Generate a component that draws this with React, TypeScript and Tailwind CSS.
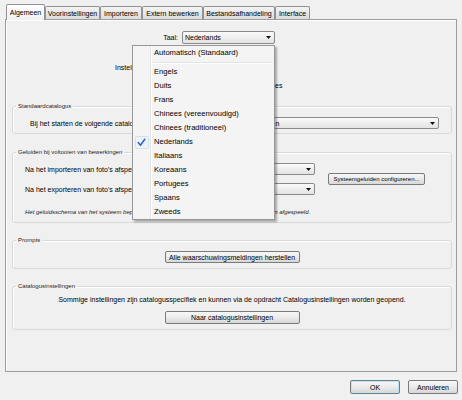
import React from "react";

function Arrow() {
  return (
    <svg width="5" height="3" viewBox="0 0 5 3" className="shrink-0">
      <path d="M0 0H5L2.5 3Z" fill="#111" />
    </svg>
  );
}

function Select({ className, text }: { className: string; text: string }) {
  return (
    <div
      className={
        "flex items-center overflow-hidden rounded-[2px] border border-[#8a8a8a] bg-linear-to-b from-[#fafafa] to-[#e3e3e3] pl-[2px] pr-[3px] " +
        className
      }
    >
      <span className="flex-1 overflow-hidden whitespace-nowrap">{text}</span>
      <Arrow />
    </div>
  );
}

function Button({ className, children }: { className: string; children: React.ReactNode }) {
  return (
    <div
      className={
        "flex items-center justify-center whitespace-nowrap rounded-[2px] border border-[#7a7a7a] bg-linear-to-b from-[#f7f7f7] via-[#ebebeb] to-[#d7d7d7] " +
        className
      }
    >
      {children}
    </div>
  );
}

function Group({
  label,
  className,
  children,
}: {
  label: string;
  className: string;
  children: React.ReactNode;
}) {
  return (
    <fieldset
      className={
        "ml-[6px] w-[440px] rounded-[3px] border border-[#d6dadd] shadow-[inset_1px_1px_0_#ffffff] " +
        className
      }
    >
      <legend className="ml-[3px] px-[2px] text-[6px] leading-[8px] text-[#1a1a1a]">{label}</legend>
      {children}
    </fieldset>
  );
}

function Tab({ className, children }: { className: string; children: React.ReactNode }) {
  return (
    <div
      className={
        "flex h-[13px] items-center justify-center whitespace-nowrap rounded-t-[2px] border border-b-0 border-[#8f9299] bg-linear-to-b from-[#f3f3f3] to-[#dcdcdc] " +
        className
      }
    >
      {children}
    </div>
  );
}

function CheckRow({ children }: { children: React.ReactNode }) {
  return (
    <div className="flex h-[12px] items-center gap-[5px] whitespace-nowrap">
      <div className="flex h-[9px] w-[9px] items-center justify-center border border-[#8f8f8f] bg-white">
        <svg width="7" height="7" viewBox="0 0 7 7">
          <path d="M1 3.5L3 5.5L6 1" stroke="#333" strokeWidth="1.2" fill="none" />
        </svg>
      </div>
      <span>{children}</span>
    </div>
  );
}

function MenuItem({ checked, children }: { checked?: boolean; children: React.ReactNode }) {
  return (
    <div className="flex h-[14px] items-center">
      <div className="flex h-full w-[18px] items-center justify-center border-r border-[#e2e3e3] shadow-[1px_0_0_#ffffff]">
        {checked && (
          <div className="flex h-[13px] w-[14px] items-center justify-center rounded-[2px] border border-[#d6e1f0] bg-[#eef3fa]">
            <svg width="9" height="9" viewBox="0 0 9 9">
              <path
                d="M1.2 4.6L3.4 7.2L7.8 1.2"
                stroke="#2a62c9"
                strokeWidth="1.5"
                fill="none"
                strokeLinecap="round"
                strokeLinejoin="round"
              />
            </svg>
          </div>
        )}
      </div>
      <span className="ml-[3px] whitespace-nowrap">{children}</span>
    </div>
  );
}

export default function App() {
  const langs = [
    "Engels",
    "Duits",
    "Frans",
    "Chinees (vereenvoudigd)",
    "Chinees (traditioneel)",
    "Nederlands",
    "Italiaans",
    "Koreaans",
    "Portugees",
    "Spaans",
    "Zweeds",
  ];
  return (
    <div className="relative h-[400px] w-[462px] overflow-hidden bg-[#f0f0f0] font-['Liberation_Sans',Arial,sans-serif] text-[7px] leading-none text-black">
      {/* Tabs */}
      <div className="flex h-[19px] items-end pl-[6px]">
        <div className="relative z-10 -mb-px flex h-[16px] w-[39px] items-center justify-center rounded-t-[2px] border border-b-0 border-[#8f9299] bg-linear-to-b from-[#ffffff] to-[#f0f0f0]">
          Algemeen
        </div>
        <Tab className="w-[55px]">Voorinstellingen</Tab>
        <Tab className="w-[42px]">Importeren</Tab>
        <Tab className="w-[61px]">Extern bewerken</Tab>
        <Tab className="w-[72px]">Bestandsafhandeling</Tab>
        <Tab className="w-[35px]">Interface</Tab>
      </div>

      {/* Panel */}
      <div className="ml-[5px] h-[353px] w-[452px] border border-[#9d9d9d] shadow-[inset_1px_1px_0_#ffffff]">
        <div className="mt-[11px] flex h-[13px] items-center">
          <span className="ml-[109px] w-[63px] text-right">Taal:</span>
          <Select className="ml-[4px] h-[13px] w-[93px]" text="Nederlands" />
        </div>

        <div className="ml-[109px] mt-[17px] flex">
          <span className="flex h-[12px] items-center">Instellingen:</span>
          <div className="ml-[4px] flex flex-col gap-[6px]">
            <CheckRow>Welkomstscherm tonen</CheckRow>
            <CheckRow>Automatisch controleren op updates</CheckRow>
          </div>
        </div>

        <Group label="Standaardcatalogus" className="mt-[11px] pb-[4px]">
          <div className="mt-[7px] flex h-[12px] items-center pl-[17px] pr-[12px]">
            <span className="whitespace-nowrap">Bij het starten de volgende catalogus gebruiken:</span>
            <Select className="ml-auto h-[12px] w-[258px]" text="Meest recente catalogus laden" />
          </div>
        </Group>

        <Group label="Geluiden bij voltooien van bewerkingen" className="mt-[14px] pb-[6px]">
          <div className="mt-[7px] flex items-center pl-[12px]">
            <div className="flex w-[290px] flex-col gap-[8px]">
              <div className="flex h-[12px] items-center">
                <span className="flex-1 whitespace-nowrap">Na het importeren van foto's afspelen:</span>
                <Select className="h-[12px] w-[144px]" text="Geen geluid" />
              </div>
              <div className="flex h-[12px] items-center">
                <span className="flex-1 whitespace-nowrap">Na het exporteren van foto's afspelen:</span>
                <Select className="h-[12px] w-[144px]" text="Geen geluid" />
              </div>
            </div>
            <Button className="ml-[13px] h-[12px] w-[97px] text-[6px]">Systeemgeluiden configureren...</Button>
          </div>
          <p className="mt-[13px] whitespace-nowrap pl-[12px] text-[6px] italic leading-[8px] text-[#222]">
            Het geluidsschema van het systeem bepaalt welke geluiden er bij deze gebeurtenissen worden afgespeeld.
          </p>
        </Group>

        <Group label="Prompts" className="mt-[13px] pb-[5px]">
          <div className="mt-[7px] flex justify-center">
            <Button className="h-[12px] w-[135px]">Alle waarschuwingsmeldingen herstellen</Button>
          </div>
        </Group>

        <Group label="Catalogusinstellingen" className="mt-[13px] pb-[5px]">
          <p className="mt-[6px] text-center leading-[8px]">
            Sommige instellingen zijn catalogusspecifiek en kunnen via de opdracht Catalogusinstellingen worden geopend.
          </p>
          <div className="mt-[7px] flex justify-center">
            <Button className="h-[13px] w-[135px]">Naar catalogusinstellingen</Button>
          </div>
        </Group>
      </div>

      {/* Footer */}
      <div className="mt-[8px] flex justify-end gap-[8px] pr-[4px]">
        <Button className="h-[14px] w-[50px] border-[#3c7fb1] shadow-[inset_0_0_0_1px_#b9e4f8]">OK</Button>
        <Button className="h-[14px] w-[50px]">Annuleren</Button>
      </div>

      {/* Dropdown menu */}
      <div className="absolute left-[132px] top-[45px] w-[143px] border border-[#979797] bg-[#f4f4f4] text-[7.6px] shadow-[2px_2px_2px_rgba(0,0,0,0.3)]">
        <MenuItem>Automatisch (Standaard)</MenuItem>
        <div className="flex h-[5px]">
          <div className="h-full w-[18px] border-r border-[#e2e3e3] shadow-[1px_0_0_#ffffff]" />
          <div className="ml-[2px] mr-[1px] mt-[2px] h-[2px] flex-1 border-b border-t border-b-white border-t-[#e2e3e3]" />
        </div>
        {langs.map((l) => (
          <MenuItem key={l} checked={l === "Nederlands"}>
            {l}
          </MenuItem>
        ))}
      </div>
    </div>
  );
}
